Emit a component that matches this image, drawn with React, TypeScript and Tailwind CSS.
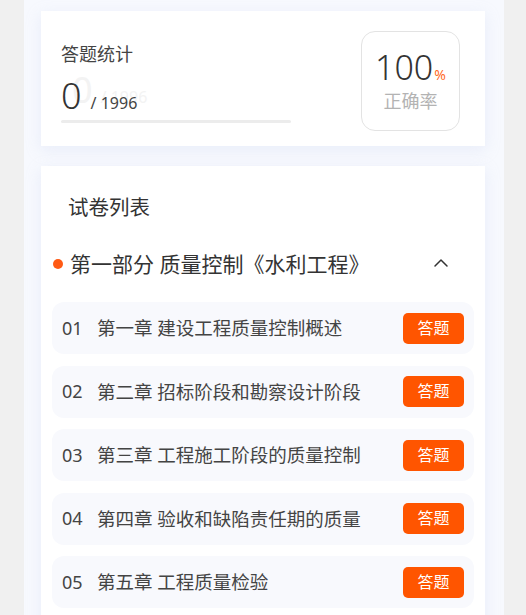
import { ChevronUp } from 'lucide-react';

const chapters = [
  { no: '01', title: '第一章 建设工程质量控制概述' },
  { no: '02', title: '第二章 招标阶段和勘察设计阶段' },
  { no: '03', title: '第三章 工程施工阶段的质量控制' },
  { no: '04', title: '第四章 验收和缺陷责任期的质量' },
  { no: '05', title: '第五章 工程质量检验' },
];

export default function App() {
  return (
    <div
      className="min-h-[615px] h-[615px] overflow-hidden bg-[#f0f0f0]"
      style={{ fontFamily: '"Noto Sans", "Noto Sans CJK SC", sans-serif' }}
    >
      <div className="ml-[24px] w-[480px] h-full bg-[#f7f9fe] pt-[11px] pl-[17px]">
        {/* Stats card */}
        <div className="w-[444px] h-[135px] bg-white shadow-[0_4px_14px_rgba(190,205,235,0.25)] flex justify-between pl-[20px] pr-[25px] pt-[20px]">
          <div className="flex flex-col pt-[11px]">
            <div className="text-[18px] leading-[24px] text-[#444]">答题统计</div>
            <div className="relative mt-[10px] flex items-baseline h-[40px]">
              <div className="absolute left-[11px] top-[-6px] flex items-baseline text-[#f3f3f3]">
                <span className="text-[36px] leading-[40px]">0</span>
                <span className="text-[16px] ml-[8px]">/ 1996</span>
              </div>
              <span className="relative text-[36px] leading-[40px] text-[#333] font-light">0</span>
              <span className="relative text-[16px] ml-[9px] text-[#444]">/ 1996</span>
            </div>
            <div className="mt-[4px] w-[230px] h-[3px] rounded-full bg-[#ececec]" />
          </div>
          <div className="w-[99px] h-[100px] rounded-[14px] border border-[#e3e3e3] flex flex-col items-center justify-center">
            <div className="flex items-baseline">
              <span className="text-[34px] leading-[38px] text-[#333] font-light">100</span>
              <span className="text-[14px] text-[#ff6a1f] ml-[1px]">%</span>
            </div>
            <div className="text-[18px] leading-[26px] text-[#b3b3b3] mt-[2px]">正确率</div>
          </div>
        </div>

        {/* Paper list card */}
        <div className="mt-[20px] w-[444px] h-[460px] bg-white shadow-[0_4px_14px_rgba(190,205,235,0.25)] px-[11px] pt-[28px]">
          <div className="pl-[16px] text-[20.5px] leading-[26px] text-[#333]">试卷列表</div>
          <div className="mt-[29px] flex items-center h-[30px]">
            <span className="ml-[1px] w-[10px] h-[10px] rounded-full bg-[#ff5a14]" />
            <span className="ml-[7px] text-[21px] leading-[30px] text-[#333]">第一部分 质量控制《水利工程》</span>
            <ChevronUp className="ml-auto mr-[21px] -mt-[3px] w-[24px] h-[24px] text-[#333]" strokeWidth={1.5} />
          </div>
          <div className="mt-[23px] flex flex-col gap-[11.5px]">
            {chapters.map((c) => (
              <div
                key={c.no}
                className="h-[52px] rounded-[12px] bg-[#f8f9fd] flex items-center pl-[10px] pr-[10px]"
              >
                <span className="text-[18px] text-[#444] w-[35px]">{c.no}</span>
                <span className="text-[18.5px] text-[#444]">{c.title}</span>
                <button className="ml-auto w-[61px] h-[31px] rounded-[5px] bg-[#ff5500] text-white text-[16px] leading-[31px]">
                  答题
                </button>
              </div>
            ))}
          </div>
        </div>
      </div>
    </div>
  );
}
